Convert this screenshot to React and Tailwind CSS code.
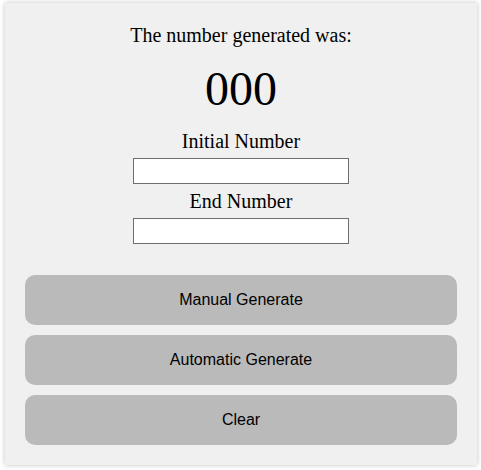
import React from 'react';

const buttons = ['Manual Generate', 'Automatic Generate', 'Clear'];

const App = () => {
  return (
    <div className="bg-white px-[5px] pt-[3px]" style={{ width: 481, height: 470 }}>
      <div className="flex h-[462px] w-[472px] flex-col items-center bg-[#f0f0f0] px-5 pt-[21px] shadow-[0_0_5px_rgba(0,0,0,0.25)]">
        <p className="text-[20px] leading-[23px] text-black [font-family:'Liberation_Serif',serif]">
          The number generated was:
        </p>
        <p className="mt-[14px] text-[48px] leading-[55px] text-black [font-family:'Liberation_Serif',serif]">000</p>

        <label className="mt-[14px] text-[20px] leading-[23px] text-black [font-family:'Liberation_Serif',serif]">
          Initial Number
        </label>
        <input type="text" className="mt-[5px] h-[26px] w-[216px] border border-[#6e6e6e] bg-white" />

        <label className="mt-[6px] text-[20px] leading-[23px] text-black [font-family:'Liberation_Serif',serif]">
          End Number
        </label>
        <input type="text" className="mt-[5px] h-[26px] w-[216px] border border-[#6e6e6e] bg-white" />

        <div className="mt-[31px] flex w-full flex-col gap-[10px]">
          {buttons.map((label) => (
            <button
              key={label}
              className="h-[50px] w-full rounded-[10px] bg-[#bababa] text-[16px] text-black [font-family:'Liberation_Sans',sans-serif]"
            >
              {label}
            </button>
          ))}
        </div>
      </div>
    </div>
  );
};

export default App;
